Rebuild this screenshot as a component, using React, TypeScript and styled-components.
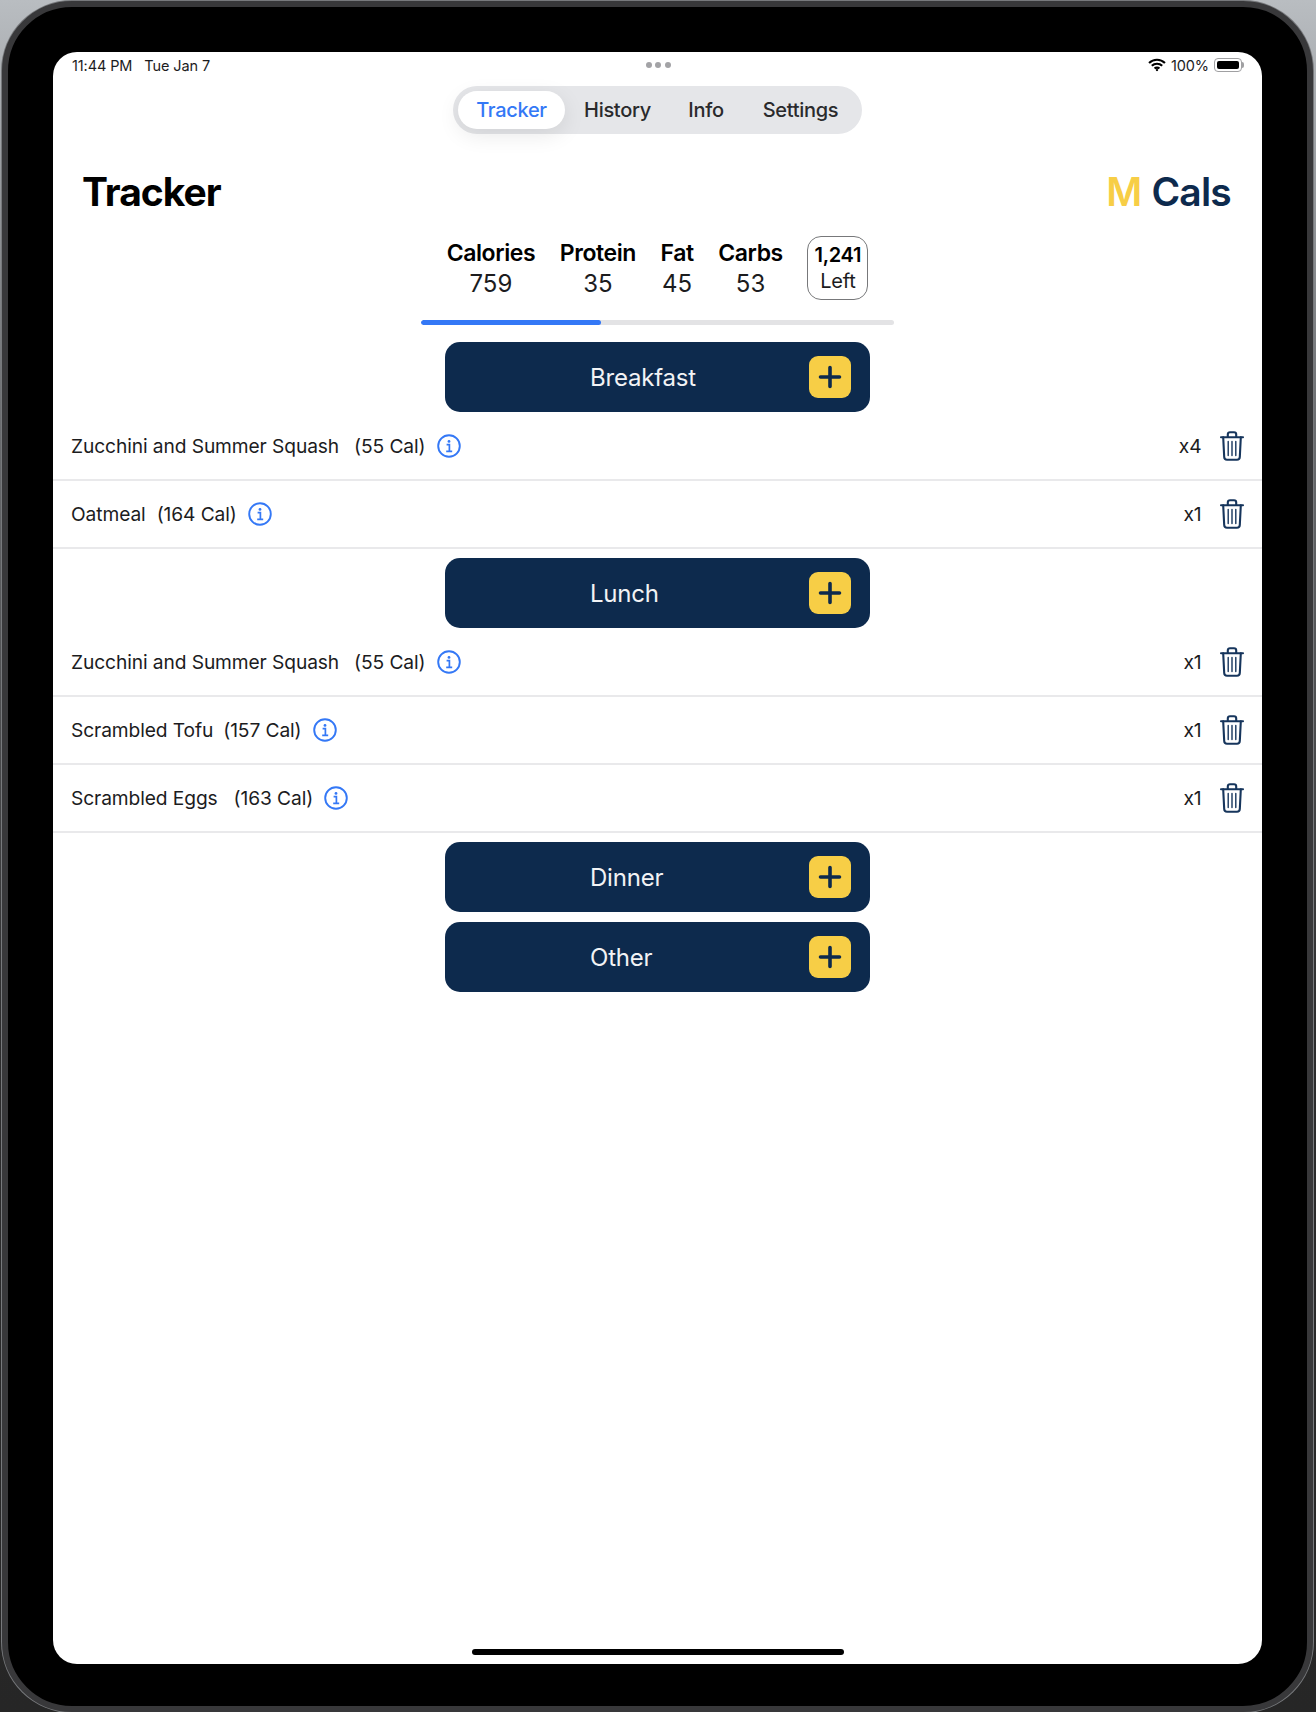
import React from "react";
import styled, { createGlobalStyle } from "styled-components";

const navy = "#0d2a4d";
const yellow = "#f7ce46";
const blue = "#3478f6";

const GlobalStyle = createGlobalStyle`
    html, body {
        margin: 0;
        padding: 0;
        font-family: Inter, "Liberation Sans", sans-serif;
    }
`;

const Page = styled.div`
    box-sizing: border-box;
    width: 1316px;
    height: 1712px;
    padding: 1px 3px 0 2px;
    display: flex;
    overflow: hidden;
    background: linear-gradient(180deg, #b9bdc1 0%, #6a6c6f 25%, #2c2c2d 60%, #262626 100%);
`;

const Device = styled.div`
    box-sizing: border-box;
    flex: 1;
    display: flex;
    padding: 45px 45px 42px 45px;
    background: #000;
    border: 6px solid #38383a;
    border-radius: 70px;
    box-shadow: 0 0 0 1px #77797c;
`;

const Screen = styled.main`
    flex: 1;
    display: flex;
    flex-direction: column;
    background: #fff;
    border-radius: 24px;
    overflow: hidden;
    color: #000;
`;

const StatusBar = styled.div`
    height: 26px;
    flex: none;
    display: grid;
    grid-template-columns: 1fr auto 1fr;
    align-items: center;
    padding: 0 18px 0 19px;
    font-size: 14.5px;
    letter-spacing: -0.1px;
    color: #1c1c1e;
`;

const StatusLeft = styled.div`
    display: flex;
    gap: 12px;
`;

const StatusRight = styled.div`
    display: flex;
    justify-content: flex-end;
    align-items: center;
    gap: 5px;
`;

const Dots = styled.div`
    display: flex;
    gap: 3.5px;
`;

const Dot = styled.span`
    width: 6px;
    height: 6px;
    border-radius: 50%;
    background: #a3a3a6;
`;

const Battery = styled.span`
    position: relative;
    box-sizing: border-box;
    width: 28px;
    height: 14px;
    margin-right: 2px;
    padding: 2px;
    display: flex;
    border: 1px solid #a0a0a2;
    border-radius: 4px;

    &::before {
        content: "";
        flex: 1;
        background: #000;
        border-radius: 2px;
    }

    &::after {
        content: "";
        position: absolute;
        right: -3px;
        top: 3px;
        width: 2px;
        height: 6px;
        background: #a0a0a2;
        border-radius: 0 2px 2px 0;
    }
`;

const TabRow = styled.div`
    flex: none;
    display: flex;
    justify-content: center;
    margin-top: 8px;
`;

const TabBar = styled.nav`
    display: flex;
    align-items: center;
    height: 48px;
    box-sizing: border-box;
    padding: 0 3px 0 5px;
    background: #e5e6e9;
    border-radius: 24px;
`;

const Tab = styled.span<{ $active?: boolean; $width: number }>`
    width: ${({ $width }) => $width}px;
    height: 38px;
    display: flex;
    align-items: center;
    justify-content: center;
    font-size: 20px;
    font-weight: 500;
    letter-spacing: -0.3px;
    border-radius: 19px;
    color: ${({ $active }) => ($active ? blue : "#2a2a2c")};
    background: ${({ $active }) => ($active ? "#fff" : "transparent")};
    box-shadow: ${({ $active }) => ($active ? "0 6px 22px rgba(0, 0, 0, 0.09)" : "none")};
`;

const Header = styled.header`
    flex: none;
    display: flex;
    justify-content: space-between;
    align-items: center;
    height: 50px;
    margin-top: 32px;
    padding: 0 31px 0 29px;
`;

const Title = styled.h1`
    margin: 0;
    font-size: 39px;
    font-weight: 700;
    letter-spacing: -1px;
`;

const Brand = styled.div`
    display: flex;
    gap: 10px;
    font-size: 39px;
    font-weight: 600;
    letter-spacing: -0.8px;
    color: ${navy};
`;

const BrandMark = styled.span`
    color: ${yellow};
`;

const Stats = styled.section`
    flex: none;
    display: flex;
    justify-content: center;
    align-items: flex-start;
    gap: 24.5px;
    margin-top: 20px;
`;

const Stat = styled.div`
    display: flex;
    flex-direction: column;
    align-items: center;
    padding-top: 2px;
`;

const StatLabel = styled.span`
    font-size: 23px;
    line-height: 30px;
    font-weight: 600;
    letter-spacing: -0.4px;
`;

const StatValue = styled.span`
    font-size: 24px;
    line-height: 32px;
    color: #1c1c1e;
`;

const LeftBox = styled.div`
    box-sizing: border-box;
    width: 61px;
    height: 64px;
    padding-bottom: 3px;
    display: flex;
    flex-direction: column;
    align-items: center;
    justify-content: center;
    border: 1px solid #77787a;
    border-radius: 14px;
`;

const LeftAmount = styled.span`
    font-size: 20px;
    line-height: 29px;
    font-weight: 600;
    letter-spacing: -0.3px;
`;

const LeftLabel = styled.span`
    font-size: 20px;
    line-height: 23px;
    letter-spacing: -0.2px;
    color: #1c1c1e;
`;

const Track = styled.div`
    flex: none;
    align-self: center;
    width: 473px;
    height: 5px;
    margin: 20px 0 8px;
    border-radius: 3px;
    background: #e3e3e5;
    overflow: hidden;
`;

const Fill = styled.div`
    height: 100%;
    border-radius: 3px;
    background: ${blue};
`;

const MealButton = styled.div`
    flex: none;
    align-self: center;
    box-sizing: border-box;
    width: 425px;
    height: 70px;
    margin: 9px 0 1px;
    padding: 0 19px 0 145px;
    display: flex;
    align-items: center;
    justify-content: space-between;
    background: ${navy};
    border-radius: 15px;
    color: #f2f3f5;
    font-size: 24px;
    letter-spacing: -0.2px;
`;

const Plus = styled.span`
    width: 42px;
    height: 42px;
    display: flex;
    align-items: center;
    justify-content: center;
    background: ${yellow};
    border-radius: 9px;
`;

const Row = styled.div`
    flex: none;
    box-sizing: border-box;
    height: 68px;
    padding: 0 18px 1px 18px;
    display: flex;
    align-items: center;
    border-bottom: 2px solid #e9e9eb;
    font-size: 19.2px;
    letter-spacing: -0.1px;
    color: #1c1c1e;
`;

const RowName = styled.span<{ $gap: number }>`
    margin-right: ${({ $gap }) => $gap}px;
`;

const RowCals = styled.span`
    margin-right: 11px;
`;

const RowCount = styled.span`
    margin-left: auto;
    margin-right: 18.5px;
`;

const Home = styled.div`
    align-self: center;
    width: 372px;
    height: 6px;
    margin-top: auto;
    margin-bottom: 9px;
    background: #000;
    border-radius: 3px;
`;

const WifiIcon = () => (
    <svg width="18" height="14" viewBox="0 0 17 13" fill="none" stroke="#000" strokeWidth="2">
        <path d="M1 4.6a10.6 10.6 0 0 1 15 0" />
        <path d="M3.6 7.3a6.9 6.9 0 0 1 9.8 0" />
        <path d="M6.2 9.9a3.2 3.2 0 0 1 4.6 0" />
        <circle cx="8.5" cy="11.3" r="1.1" fill="#000" stroke="none" />
    </svg>
);

const PlusIcon = () => (
    <svg width="24" height="24" viewBox="0 0 24 24" fill="none" stroke={navy} strokeWidth="3.6" strokeLinecap="round">
        <path d="M12 2.5v19M2.5 12h19" />
    </svg>
);

const InfoIcon = () => (
    <svg width="24" height="24" viewBox="0 0 24 24" fill="none" stroke={blue} strokeWidth="1.9">
        <circle cx="12" cy="12" r="10.8" />
        <circle cx="12" cy="7.4" r="1.4" fill={blue} stroke="none" />
        <path d="M9.6 10.7H12.4V17.2M9.2 17.4H15.2" strokeWidth="1.7" />
    </svg>
);

const TrashIcon = () => (
    <svg width="24" height="30" viewBox="0 0 24 30" fill="none" stroke="#16355c" strokeWidth="2.1" strokeLinecap="round" strokeLinejoin="round">
        <path d="M1 6.2h22" />
        <path d="M7.8 6V3.4c0-1.3.9-2.2 2.2-2.2h4c1.3 0 2.2.9 2.2 2.2V6" />
        <path d="M3.2 6.4l1 19.6c.1 1.7 1.1 2.8 2.8 2.8h10c1.7 0 2.7-1.1 2.8-2.8l1-19.6" />
        <path d="M8.2 10.5v14M12 10.5v14M15.8 10.5v14" strokeWidth="1.4" />
    </svg>
);

type Food = { name: string; cals: number; count: number; gap: number };

type Meal = { title: string; foods: Food[] };

const meals: Meal[] = [
    {
        title: "Breakfast",
        foods: [
            { name: "Zucchini and Summer Squash", cals: 55, count: 4, gap: 15 },
            { name: "Oatmeal", cals: 164, count: 1, gap: 11 },
        ],
    },
    {
        title: "Lunch",
        foods: [
            { name: "Zucchini and Summer Squash", cals: 55, count: 1, gap: 15 },
            { name: "Scrambled Tofu", cals: 157, count: 1, gap: 10 },
            { name: "Scrambled Eggs", cals: 163, count: 1, gap: 16 },
        ],
    },
    { title: "Dinner", foods: [] },
    { title: "Other", foods: [] },
];

const stats = [
    { label: "Calories", value: 759 },
    { label: "Protein", value: 35 },
    { label: "Fat", value: 45 },
    { label: "Carbs", value: 53 },
];

const App: React.FC = () => (
    <Page>
        <GlobalStyle />
        <Device>
            <Screen>
                <StatusBar>
                    <StatusLeft>
                        <span>11:44 PM</span>
                        <span>Tue Jan 7</span>
                    </StatusLeft>
                    <Dots>
                        <Dot />
                        <Dot />
                        <Dot />
                    </Dots>
                    <StatusRight>
                        <WifiIcon />
                        <span>100%</span>
                        <Battery />
                    </StatusRight>
                </StatusBar>
                <TabRow>
                    <TabBar>
                        <Tab $active $width={107}>Tracker</Tab>
                        <Tab $width={105}>History</Tab>
                        <Tab $width={72}>Info</Tab>
                        <Tab $width={117}>Settings</Tab>
                    </TabBar>
                </TabRow>
                <Header>
                    <Title>Tracker</Title>
                    <Brand>
                        <BrandMark>M</BrandMark>
                        <span>Cals</span>
                    </Brand>
                </Header>
                <Stats>
                    {stats.map((stat) => (
                        <Stat key={stat.label}>
                            <StatLabel>{stat.label}</StatLabel>
                            <StatValue>{stat.value}</StatValue>
                        </Stat>
                    ))}
                    <LeftBox>
                        <LeftAmount>1,241</LeftAmount>
                        <LeftLabel>Left</LeftLabel>
                    </LeftBox>
                </Stats>
                <Track>
                    <Fill style={{ width: `${(759 / 2000) * 100}%` }} />
                </Track>
                {meals.map((meal) => (
                    <React.Fragment key={meal.title}>
                        <MealButton>
                            <span>{meal.title}</span>
                            <Plus>
                                <PlusIcon />
                            </Plus>
                        </MealButton>
                        {meal.foods.map((food) => (
                            <Row key={food.name}>
                                <RowName $gap={food.gap}>{food.name}</RowName>
                                <RowCals>({food.cals} Cal)</RowCals>
                                <InfoIcon />
                                <RowCount>x{food.count}</RowCount>
                                <TrashIcon />
                            </Row>
                        ))}
                    </React.Fragment>
                ))}
                <Home />
            </Screen>
        </Device>
    </Page>
);

export default App;
